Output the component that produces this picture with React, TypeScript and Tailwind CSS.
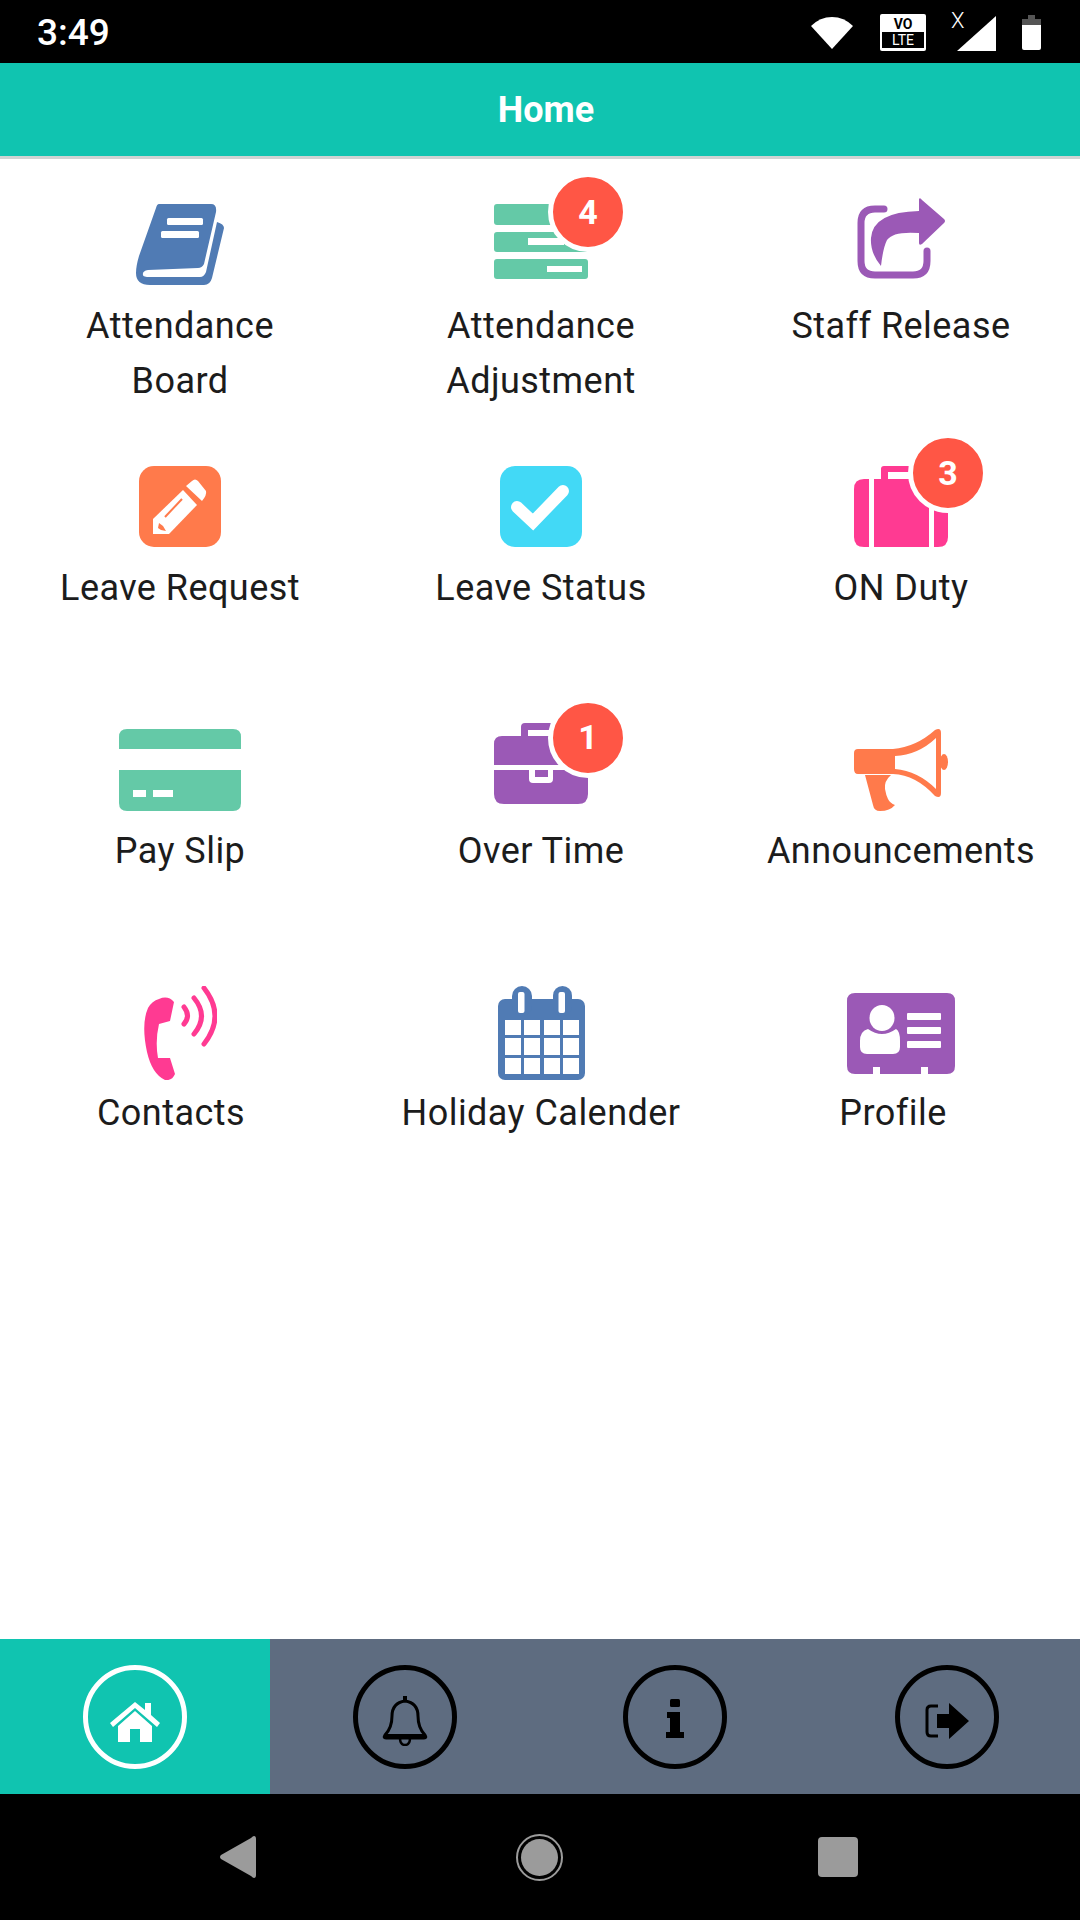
import React from "react";

// Hand traced icons, viewBox numbers are reference pixels
function BookIcon() {
  return (
    <svg width="88" height="82" viewBox="0 0 88 82" fill="#507bb4">
      <path d="M23 0H75Q81 0 80 8L68 60Q66 64 62 64L12 66Q6 67 7 71Q7 73 14 73H64Q68 73 70 68L81 18Q88 20 88 24L76 74Q74 81 68 81H14Q0 81 0 69Q0 62 3 52L20 4Q21 0 23 0Z" />
      <rect x="31" y="14" width="36" height="7" rx="1.5" fill="#fff" />
      <rect x="25" y="27" width="38" height="7" rx="1.5" fill="#fff" />
    </svg>
  );
}

function BarsIcon() {
  return (
    <svg width="94" height="75" viewBox="0 0 94 75" fill="#64c9a7">
      <rect x="0" y="0" width="94" height="21" rx="3" />
      <rect x="0" y="28" width="94" height="20" rx="3" />
      <rect x="0" y="55" width="94" height="20" rx="3" />
      <rect x="34" y="34" width="36" height="7" fill="#fff" />
      <rect x="53" y="62" width="35" height="6" fill="#fff" />
    </svg>
  );
}

function ShareIcon() {
  return (
    <svg width="88" height="81" viewBox="0 0 88 81" fill="none">
      <path d="M27 11H18Q4 11 4 25V63Q4 77 18 77H56Q70 77 70 63V53" stroke="#9b59b6" strokeWidth="7" strokeLinecap="round" />
      <path d="M62 1Q63 -1 65 2L87 21Q89 23 87 25L65 46Q62 48 62 45V35Q36 33 30 42Q26 50 24 68Q13 55 14 40Q16 14 62 13Z" fill="#9b59b6" />
    </svg>
  );
}

function PencilIcon() {
  return (
    <svg width="82" height="81" viewBox="0 0 82 81">
      <rect width="82" height="81" rx="15" fill="#ff7a4b" />
      <path d="M53 15Q56 12 59 15L67 25Q68 29 63 35L47 20Z" fill="#fff" />
      <path d="M44 24L58 39L30 68H14V53Z" fill="#fff" />
      <path d="M43 33L26 51" stroke="#ff7a4b" strokeWidth="2" />
      <path d="M20 57L24 60L27 65L22 64L19 62Z" fill="#ff7a4b" />
    </svg>
  );
}

function CheckIcon() {
  return (
    <svg width="82" height="81" viewBox="0 0 82 81">
      <rect width="82" height="81" rx="15" fill="#42d9f6" />
      <path d="M17 41L33 56L63 25" fill="none" stroke="#fff" strokeWidth="12" strokeLinejoin="miter" strokeLinecap="round" />
    </svg>
  );
}

function SuitcaseIcon() {
  return (
    <svg width="94" height="81" viewBox="0 0 94 81" fill="#ff3a92">
      <path d="M27 13V3Q27 0 30 0H64Q67 0 67 3V13H60V6H34V13Z" />
      <path d="M15 13V81H10Q0 81 0 71V23Q0 13 10 13Z" />
      <rect x="20" y="13" width="55" height="68" />
      <path d="M80 13H84Q94 13 94 23V71Q94 81 84 81H80Z" />
    </svg>
  );
}

function CardIcon() {
  return (
    <svg width="122" height="82" viewBox="0 0 122 82" fill="#64c9a7">
      <path d="M0 20V8Q0 0 8 0H114Q122 0 122 8V20Z" />
      <path d="M0 41H122V74Q122 82 114 82H8Q0 82 0 74Z" />
      <rect x="14" y="61" width="13" height="7" fill="#fff" />
      <rect x="34" y="61" width="20" height="7" fill="#fff" />
    </svg>
  );
}

function BriefcaseIcon() {
  return (
    <svg width="94" height="81" viewBox="0 0 94 81" fill="#9b59b6">
      <path d="M27 13V4Q27 0 31 0H63Q67 0 67 4V13H60V7H34V13Z" />
      <path d="M0 42V21Q0 13 8 13H86Q94 13 94 21V42Z" />
      <path d="M0 47H35V56Q35 60 39 60H55Q59 60 59 56V47H94V71Q94 81 84 81H10Q0 81 0 71Z" />
      <rect x="41" y="47" width="13" height="7" />
    </svg>
  );
}

function MegaphoneIcon() {
  return (
    <svg width="94" height="82" viewBox="0 0 94 82" fill="#ff7a4b">
      <path fillRule="evenodd" d="M4 20H39Q62 18 81 1Q87 -2 87 4V64Q87 70 81 67Q62 46 39 45H4Q0 45 0 40V24Q0 20 4 20ZM41 27V40Q64 42 82 60V9Q64 26 41 27Z" />
      <ellipse cx="90" cy="33" rx="4" ry="8" />
      <path d="M11 46H37Q30 52 31 60Q32 66 34 70Q36 74 41 76Q36 82 26 82Q20 82 19 76Z" />
    </svg>
  );
}

function PhoneIcon() {
  return (
    <svg width="73" height="94" viewBox="0 0 73 94" fill="none">
      <path d="M15 13Q24 9 30 16L26 35L15 38Q11 55 14 72L26 72L31 88Q28 95 21 94Q8 88 3 66Q-3 38 4 22Q8 15 15 13Z" fill="#ff3a92" />
      <path d="M40 21Q47 30 40 38" stroke="#ff3a92" strokeWidth="5" strokeLinecap="round" />
      <path d="M50 12Q65 30 50 48" stroke="#ff3a92" strokeWidth="5" strokeLinecap="round" />
      <path d="M60 2Q82 30 60 58" stroke="#ff3a92" strokeWidth="5" strokeLinecap="round" />
    </svg>
  );
}

function CalendarIcon() {
  const xs = [7, 26, 46, 65];
  const rows = [
    [34, 15],
    [52, 17],
    [72, 16],
  ];
  return (
    <svg width="87" height="94" viewBox="0 0 87 94" fill="#507bb4">
      <rect x="0" y="13" width="87" height="81" rx="7" />
      <rect x="14" y="0" width="20" height="30" rx="10" />
      <rect x="55" y="0" width="19" height="30" rx="9.5" />
      <rect x="20" y="6" width="6.5" height="21" rx="2" fill="#fff" />
      <rect x="60.5" y="6" width="6.5" height="21" rx="2" fill="#fff" />
      {rows.map(([y, h]) =>
        xs.map((x) => <rect key={`${x}-${y}`} x={x} y={y} width="16" height={h} fill="#fff" />),
      )}
    </svg>
  );
}

function IdCardIcon() {
  return (
    <svg width="108" height="81" viewBox="0 0 108 81">
      <path d="M8 0H100Q108 0 108 8V73Q108 81 100 81H81V74H74V81H33V74H26V81H8Q0 81 0 73V8Q0 0 8 0Z" fill="#9b59b6" />
      <ellipse cx="35" cy="25" rx="12.5" ry="13" fill="#fff" />
      <path d="M21 36Q28 41 35 41Q42 41 49 36Q53 38 53 48V54Q53 61 46 61H20Q13 61 13 54V48Q13 38 21 36Z" fill="#fff" />
      <rect x="60" y="20" width="34" height="7" rx="1" fill="#fff" />
      <rect x="60" y="34" width="34" height="7" rx="1" fill="#fff" />
      <rect x="60" y="48" width="34" height="7" rx="1" fill="#fff" />
    </svg>
  );
}

function HomeGlyph() {
  return (
    <svg width="50" height="40" viewBox="0 0 50 40" fill="#fff">
      <path d="M8 24L25 9L42 24V40H30V27H20V40H8Z" />
      <path d="M0 21L25 0L35 8V1H41V13L50 21L47 25L25 6L3 25Z" />
    </svg>
  );
}

function BellGlyph() {
  return (
    <svg width="46" height="50" viewBox="0 0 46 50" fill="none" stroke="#000" strokeWidth="3">
      <path d="M23 5Q10 7 10 20Q10 32 3 39Q1 42 4 42H42Q45 42 43 39Q36 32 36 20Q36 7 23 5Z" strokeLinejoin="round" />
      <path d="M2 40H44" strokeWidth="4" />
      <path d="M23 0V5" strokeWidth="4" />
      <path d="M18 42Q18 49 23 49Q28 49 28 42" strokeWidth="2.5" />
    </svg>
  );
}

function InfoGlyph() {
  return (
    <svg width="18" height="39" viewBox="0 0 18 39" fill="#000">
      <rect x="4" y="0" width="10" height="8" rx="1.5" />
      <path d="M1 13H14V33H18V39H0V33H4V19H1Z" />
    </svg>
  );
}

function LogoutGlyph() {
  return (
    <svg width="44" height="36" viewBox="0 0 44 36" fill="none">
      <path d="M13 3H6Q2 3 2 7V29Q2 33 6 33H13" stroke="#000" strokeWidth="3" />
      <path d="M12 11H24V0L44 18L24 36V25H12Z" fill="#000" />
    </svg>
  );
}

function Badge({ n, className }: { n: number; className: string }) {
  return (
    <div className={`absolute -right-[40px] flex h-[80px] w-[80px] items-center justify-center rounded-full border-[5px] border-white bg-[#ff5645] text-[34px] font-bold text-white ${className}`}>
      {n}
    </div>
  );
}

const ITEMS = [
  { label: ["Attendance", "Board"], Icon: BookIcon },
  { label: ["Attendance", "Adjustment"], Icon: BarsIcon, badge: 4, badgeClass: "-top-[32px]" },
  { label: ["Staff Release"], Icon: ShareIcon, iconClass: "-mt-[6px]" },
  { label: ["Leave Request"], Icon: PencilIcon },
  { label: ["Leave Status"], Icon: CheckIcon },
  { label: ["ON Duty"], Icon: SuitcaseIcon, badge: 3, badgeClass: "-top-[33px]" },
  { label: ["Pay Slip"], Icon: CardIcon },
  { label: ["Over Time"], Icon: BriefcaseIcon, badge: 1, badgeClass: "-top-[25px]", iconClass: "-mt-[6px]" },
  { label: ["Announcements"], Icon: MegaphoneIcon },
  { label: ["Contacts"], Icon: PhoneIcon, labelClass: "mr-[18px]", iconClass: "-mt-[5px]" },
  { label: ["Holiday Calender"], Icon: CalendarIcon, iconClass: "-mt-[5px]" },
  { label: ["Profile"], Icon: IdCardIcon, labelClass: "mr-[16px]", iconClass: "mt-[2px]" },
];

const TABS = [
  { Glyph: BellGlyph, circle: "pt-[8px]" },
  { Glyph: InfoGlyph, circle: "pt-[4px]" },
  { Glyph: LogoutGlyph, circle: "pt-[8px] ml-[3px]" },
];

export default function App() {
  return (
    <div className="flex h-[1920px] w-[1080px] flex-col bg-white font-['Roboto',sans-serif]">
      {/* Status bar */}
      <div className="flex h-[63px] items-center justify-between bg-black pl-[37px] pr-[39px] pt-[2px] text-white">
        <span className="text-[37px] font-medium leading-none">3:49</span>
        <div className="flex items-center">
          <svg width="42" height="32" viewBox="0 0 42 32" fill="#fff" className="mr-[27px]">
            <path d="M21 32L0 9Q9 0 21 0Q33 0 42 9Z" />
          </svg>
          <svg width="46" height="37" viewBox="0 0 46 37" className="mr-[31px]">
            <rect width="46" height="37" rx="2" fill="#fff" />
            <rect x="2" y="18" width="42" height="16" fill="#000" />
            <text x="23" y="15" textAnchor="middle" fontSize="14" fontWeight="700" fill="#000">VO</text>
            <text x="23" y="31" textAnchor="middle" fontSize="14" fill="#fff">LTE</text>
          </svg>
          <div className="relative mr-[26px] h-[37px] w-[39px]">
            <svg width="39" height="35" viewBox="0 0 39 35" fill="#fff" className="absolute bottom-0 left-0">
              <path d="M39 0V35H0Z" />
            </svg>
            <span className="absolute -left-[6px] -top-[4px] text-[22px] font-light leading-none">X</span>
          </div>
          <svg width="19" height="35" viewBox="0 0 19 35">
            <path d="M6 0H13V4H19V12H0V4H6Z" fill="#555" />
            <path d="M0 10H19V33Q19 35 17 35H2Q0 35 0 33Z" fill="#fff" />
          </svg>
        </div>
      </div>

      {/* Header */}
      <div className="flex h-[96px] items-center justify-center border-b-[3px] border-[#cfd4d3] bg-[#10c4b0] pl-[12px] text-[36px] font-bold text-white">
        Home
      </div>

      {/* Menu grid */}
      <div className="grid flex-1 grid-cols-[360px_362px_358px] content-start pt-[45px]">
        {ITEMS.map(({ label, Icon, badge, badgeClass, iconClass, labelClass }) => (
          <div key={label.join(" ")} className="flex h-[262.3px] flex-col items-center">
            <div className="flex h-[95px] items-start">
              <div className={`relative ${iconClass ?? ""}`}>
                <Icon />
                {badge !== undefined && <Badge n={badge} className={badgeClass ?? ""} />}
              </div>
            </div>
            {label.map((line) => (
              <div key={line} className={`text-[36px] leading-[55px] tracking-[0.45px] text-[#1c1c1c] ${labelClass ?? ""}`}>
                {line}
              </div>
            ))}
          </div>
        ))}
      </div>

      {/* Bottom tabs */}
      <div className="grid h-[155px] grid-cols-4 bg-[#5e6c80]">
        <div className="flex items-center justify-center bg-[#10c4b0]">
          <div className="flex h-[104px] w-[104px] items-center justify-center rounded-full border-[5px] border-white pt-[10px]">
            <HomeGlyph />
          </div>
        </div>
        {TABS.map(({ Glyph, circle }, i) => (
          <div key={i} className="flex items-center justify-center">
            <div className={`flex h-[104px] w-[104px] items-center justify-center rounded-full border-[5px] border-black ${circle}`}>
              <Glyph />
            </div>
          </div>
        ))}
      </div>

      {/* Android nav bar */}
      <div className="relative flex h-[126px] items-center bg-black pl-[220px]">
        <svg width="36" height="42" viewBox="0 0 36 42" fill="#9b9b9b" className="mr-[260px]">
          <path d="M34 0Q36 0 36 3V39Q36 42 34 42Q33 42 31 40L1 23Q-1 21 1 19L31 2Q33 0 34 0Z" />
        </svg>
        <div className="mr-[255px] flex h-[47px] w-[47px] items-center justify-center rounded-full border-2 border-[#9b9b9b]">
          <div className="h-[37px] w-[37px] rounded-full bg-[#9b9b9b]" />
        </div>
        <div className="h-[40px] w-[40px] rounded-[4px] bg-[#9b9b9b]" />
      </div>
    </div>
  );
}
